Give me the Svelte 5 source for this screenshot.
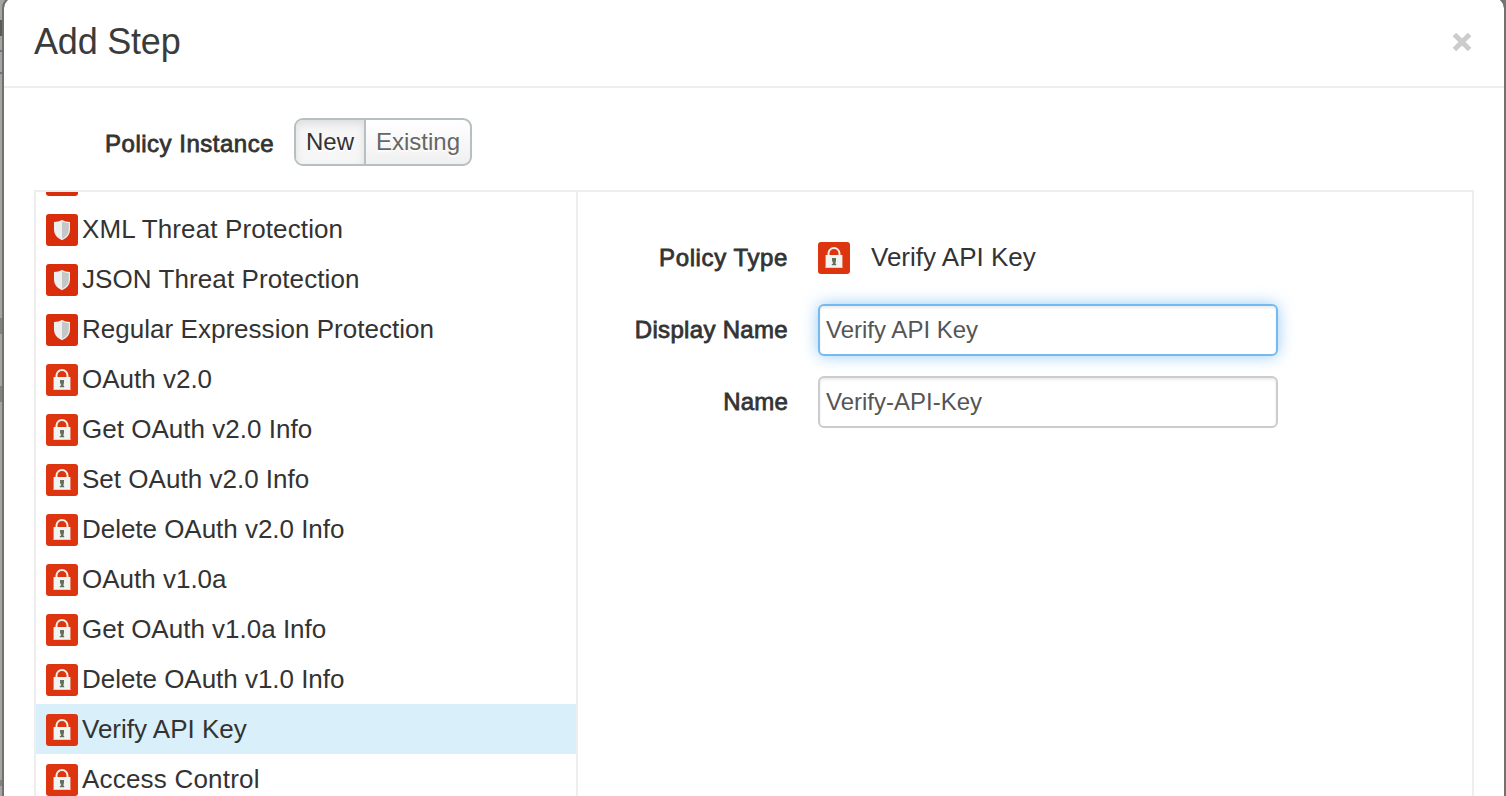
<script>
  const policies = [
    { name: '', icon: 'shield', ls: 0 },
    { name: 'XML Threat Protection', icon: 'shield', ls: 0.12 },
    { name: 'JSON Threat Protection', icon: 'shield', ls: 0.09 },
    { name: 'Regular Expression Protection', icon: 'shield', ls: 0.03 },
    { name: 'OAuth v2.0', icon: 'lock', ls: 0 },
    { name: 'Get OAuth v2.0 Info', icon: 'lock', ls: 0.02 },
    { name: 'Set OAuth v2.0 Info', icon: 'lock', ls: 0.02 },
    { name: 'Delete OAuth v2.0 Info', icon: 'lock', ls: -0.03 },
    { name: 'OAuth v1.0a', icon: 'lock', ls: 0 },
    { name: 'Get OAuth v1.0a Info', icon: 'lock', ls: 0 },
    { name: 'Delete OAuth v1.0 Info', icon: 'lock', ls: -0.03 },
    { name: 'Verify API Key', icon: 'lock', ls: 0 },
    { name: 'Access Control', icon: 'lock', ls: 0.2 }
  ];
  let selected = $state('Verify API Key');
  let displayName = $state('Verify API Key');
  let name = $state('Verify-API-Key');
</script>

{#snippet policyIcon(kind)}
  <svg class="icon" width="32" height="32" viewBox="0 0 32 32" aria-hidden="true">
    <rect width="32" height="32" rx="3" fill={kind === 'lock' ? '#dc350f' : '#d82e0b'} />
    {#if kind === 'shield'}
      <path d="M16 6 Q12.500 7.800 8 8 V16 Q8.200 23 16 26.300 Q23.800 23 24 16 V8 Q19.500 7.800 16 6 Z" fill="#edf0ef" />
      <path d="M16 7.500 Q19 8.900 22.800 9.200 V16 Q22.600 21.800 16 25 Z" fill="#c5c7c6" />
    {:else}
      <path d="M10.500 14 V11.500 A5.500 5.500 0 0 1 21.500 11.500 V14" fill="none" stroke="#eef0ea" stroke-width="2" />
      <rect x="7.600" y="13" width="16.800" height="13" fill="#f1f4f0" />
      <path d="M7.600 25.500 H24.400" stroke="#dcd5cd" />
      <path d="M14 16 H18 V19.500 H17.600 V22 H18.200 V23.200 H13.800 V22 H14.800 V19.500 H14 Z" fill="#66705f" />
    {/if}
  </svg>
{/snippet}

<div class="backdrop">
  <div class="modal">
    <header>
      <h3>Add Step</h3>
      <button class="close" aria-label="Close">
        <svg width="20" height="20" viewBox="0 0 20 20"><path d="M2.400 2.400 L17.600 17.600 M17.600 2.400 L2.400 17.600" stroke="#ccc" stroke-width="5" /></svg>
      </button>
    </header>
    <div class="instance">
      <span class="label" style="letter-spacing:0.5px">Policy Instance</span>
      <div class="toggle">
        <button class="active">New</button>
        <button class="existing">Existing</button>
      </div>
    </div>
    <div class="panel">
      <div class="list">
        <ul>
          {#each policies as p}
            <li class:selected={p.name === selected}>
              {@render policyIcon(p.icon)}
              {#if p.name}<span style="letter-spacing:{p.ls}px">{p.name}</span>{/if}
            </li>
          {/each}
        </ul>
      </div>
      <div class="form">
        <div class="row type">
          <span class="label" style="letter-spacing:0.6px">Policy Type</span>
          {@render policyIcon('lock')}
          <span class="value">{selected}</span>
        </div>
        <div class="row">
          <label class="label" for="display" style="letter-spacing:0.32px">Display Name</label>
          <input id="display" class="focused" bind:value={displayName} />
        </div>
        <div class="row">
          <label class="label" for="name" style="letter-spacing:0.2px">Name</label>
          <input id="name" class="plain" bind:value={name} />
        </div>
      </div>
    </div>
  </div>
</div>

<style>
  :global(body) { margin: 0; overflow: hidden; }
  .backdrop {
    box-sizing: border-box;
    width: 1506px;
    height: 796px;
    padding-left: 2px;
    overflow: hidden;
    background:
      linear-gradient(#5b5a58, #5b5a58) 0 20px / 4px 16px no-repeat,
      linear-gradient(#71757a, #71757a) 0 50px / 4px 2px no-repeat,
      linear-gradient(#71757a, #71757a) 0 72px / 4px 2px no-repeat,
      linear-gradient(#838280, #838280) 0 318px / 4px 16px no-repeat,
      linear-gradient(#838280, #838280) 0 386px / 4px 16px no-repeat,
      linear-gradient(#838280, #838280) 0 780px / 4px 6px no-repeat,
      linear-gradient(90deg, #a5a4a2 0 50%, #777 50%);
    font-family: "Liberation Sans", Arial, sans-serif;
    color: #333;
  }
  .modal {
    box-sizing: border-box;
    height: 820px;
    margin-top: -4px;
    border: 2px solid #73716e;
    border-radius: 12px;
    background: #fff;
    background-clip: padding-box;
    display: flex;
    flex-direction: column;
  }
  header {
    box-sizing: border-box;
    flex: none;
    height: 90px;
    padding: 0 32px 1px 30px;
    border-bottom: 2px solid #eee;
    display: flex;
    align-items: center;
    justify-content: space-between;
  }
  h3 { margin: 0; font-size: 36px; line-height: 40px; font-weight: 400; color: #3b3b3b; letter-spacing: -0.2px; }
  button { border: 0; background: none; padding: 0; font: inherit; }
  .close { display: flex; }
  .instance { flex: none; display: flex; height: 102px; padding-top: 30px; box-sizing: border-box; }
  .label {
    box-sizing: border-box;
    flex: none;
    font-size: 24px;
    line-height: 50px;
    text-align: right;
    white-space: nowrap;
    -webkit-text-stroke: 0.8px #333;
  }
  .instance .label { width: 270px; line-height: 52px; }
  .toggle {
    box-sizing: border-box;
    width: 178px;
    height: 48px;
    margin-left: 20px;
    border: 2px solid #b6bfc2;
    border-radius: 9px;
    display: flex;
    overflow: hidden;
    background: linear-gradient(#fff, #f0f0f0);
    font-size: 24px;
  }
  .toggle button { height: 44px; line-height: 42px; flex: 1; color: #666; text-align: center; text-shadow: 0 2px 2px #fff; }
  .toggle .active {
    flex: none;
    box-sizing: border-box;
    width: 70px;
    border-right: 2px solid #b6bfc2;
    color: #333;
    background: #f6f6f6;
    box-shadow: inset 0 4px 9px rgba(0, 0, 0, 0.1);
  }
  .panel {
    box-sizing: border-box;
    width: 1440px;
    height: 640px;
    margin-left: 30px;
    border: 2px solid #eee;
    display: flex;
  }
  .list { flex: none; width: 540px; border-right: 2px solid #eee; overflow: hidden; }
  ul { list-style: none; margin: -38px 0 0; padding: 0; }
  li { display: flex; height: 50px; padding-left: 10px; align-items: flex-start; font-size: 26px; line-height: 50px; white-space: nowrap; }
  li .icon { margin: 10px 4px 0 0; }
  .selected { background: #d9eff9; }
  .icon { display: block; flex: none; }
  .form { flex: 1; padding-top: 40px; }
  .row { display: flex; height: 72px; }
  .row .label { width: 210px; margin-right: 30px; line-height: 52px; }
  .type .icon { margin-top: 10px; }
  .value { margin-left: 21px; font-size: 26px; line-height: 50px; }
  input {
    box-sizing: border-box;
    width: 460px;
    height: 52px;
    padding: 0 6px;
    border: 2px solid #ccc;
    border-radius: 6px;
    background: #fff;
    color: #555;
    font: 24px "Liberation Sans", Arial, sans-serif;
    box-shadow: inset 0 2px 3px rgba(0, 0, 0, 0.075);
    outline: 0;
  }
  .focused { border-color: #74b9ef; box-shadow: inset 0 2px 3px rgba(0, 0, 0, 0.075), 0 0 16px rgba(82, 168, 236, 0.6); }
</style>
